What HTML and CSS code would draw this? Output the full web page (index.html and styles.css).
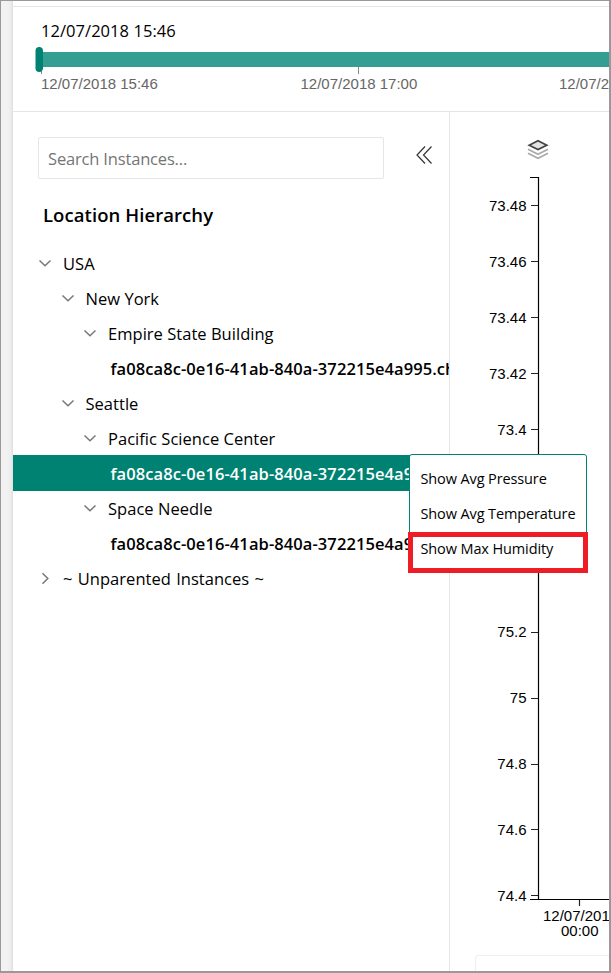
FILE: index.html
```html
<!DOCTYPE html>
<html lang="en">
<head>
<meta charset="utf-8">
<title>Location Hierarchy</title>
<link rel="stylesheet" href="styles.css">
</head>
<body>
<svg class="defs" width="0" height="0" aria-hidden="true">
  <symbol id="open" viewBox="0 0 14 14"><path d="M1.5 3.500 7 8.700 12.500 3.500" fill="none" stroke="#777" stroke-width="1.5"/></symbol>
  <symbol id="closed" viewBox="0 0 14 14"><path d="M4.5 1.300 9.800 6.500 4.500 11.700" fill="none" stroke="#777" stroke-width="1.5"/></symbol>
</svg>
<div class="window">
  <div class="gutter"></div>
  <main class="main">
    <section class="timeline">
      <div class="current">12/07/2018 15:46</div>
      <svg class="track" width="596" height="50" viewBox="0 0 596 50">
        <rect x="26" y="7" width="570" height="15" fill="#339e91"/>
        <path d="M28.5 22v7M345.5 22v7" stroke="#888"/>
        <rect x="22.5" y="2" width="7.5" height="25" rx="3.75" fill="#008272"/>
        <g class="label">
          <text x="28" y="44">12/07/2018 15:46</text>
          <text x="287.500" y="44">12/07/2018 17:00</text>
          <text x="546" y="44">12/07/2</text>
        </g>
      </svg>
    </section>
    <div class="body">
      <aside class="sidebar">
        <div class="searchbar">
          <input class="search" type="text" placeholder="Search Instances...">
          <svg class="collapse" width="18" height="20" viewBox="0 0 18 20"><path d="M10 1.500 2 10l8 8.500M16.500 1.500 8.500 10l8 8.500" fill="none" stroke="#333" stroke-width="1.200"/></svg>
        </div>
        <h1 class="heading"><span>Location Hierarchy</span></h1>
        <ul class="tree">
          <li class="row"><svg class="chev"><use href="#open"/></svg><span>USA</span></li>
          <li class="row l1"><svg class="chev"><use href="#open"/></svg><span>New York</span></li>
          <li class="row l2"><svg class="chev"><use href="#open"/></svg><span>Empire State Building</span></li>
          <li class="row leaf"><span>fa08ca8c-0e16-41ab-840a-372215e4a995.ch</span></li>
          <li class="row l1"><svg class="chev"><use href="#open"/></svg><span>Seattle</span></li>
          <li class="row l2"><svg class="chev"><use href="#open"/></svg><span>Pacific Science Center</span></li>
          <li class="row leaf selected"><span>fa08ca8c-0e16-41ab-840a-372215e4a9</span></li>
          <li class="row l2"><svg class="chev"><use href="#open"/></svg><span>Space Needle</span></li>
          <li class="row leaf"><span>fa08ca8c-0e16-41ab-840a-372215e4a9</span></li>
          <li class="row unparented"><svg class="chev"><use href="#closed"/></svg><span>~ Unparented Instances ~</span></li>
        </ul>
      </aside>
      <section class="chart">
        <svg width="159" height="843" viewBox="0 0 159 843">
          <g fill="none">
            <path d="M78 41.200 88 46.200l10-5M78 37.200l10 5 10-5" stroke="#aaa" stroke-width="1.700"/>
            <path d="M79.200 33.200 88 28.800l8.800 4.400-8.800 4.400Z" fill="#e4e4e4" stroke="#444" stroke-width="1.700"/>
          </g>
          <path d="M80 65.500h8.500v722M80 787.500h79" fill="none" stroke="#000" stroke-width="1.200"/>
          <path d="M81 93.500h7M81 149.500h7M81 205.500h7M81 261.500h7M81 317.500h7M81 520.500h7M81 586.500h7M81 652.500h7M81 717.500h7M81 783.500h7M129.500 788v6" stroke="#222" stroke-width="1.200"/>
          <g class="ylabels">
            <text x="76.500" y="99">73.48</text>
            <text x="76.500" y="155">73.46</text>
            <text x="76.500" y="211">73.44</text>
            <text x="76.500" y="267">73.42</text>
            <text x="76.500" y="323">73.4</text>
            <text x="76.500" y="525">75.2</text>
            <text x="76.500" y="591">75</text>
            <text x="76.500" y="657">74.8</text>
            <text x="76.500" y="723">74.6</text>
            <text x="76.500" y="789">74.4</text>
          </g>
          <g class="xlabels">
            <text x="93" y="809">12/07/201</text>
            <text x="111" y="824">00:00</text>
          </g>
        </svg>
        <div class="legend"></div>
      </section>
    </div>
  </main>
  <div class="menu">
    <div class="item">Show Avg Pressure</div>
    <div class="item">Show Avg Temperature</div>
    <div class="item marked">Show Max Humidity</div>
  </div>
</div>
</body>
</html>
```
FILE: styles.css
```css
*, *::before { box-sizing: border-box; }
body {
  margin: 0;
  font-family: "Open Sans", "Noto Sans", sans-serif;
  color: #000;
  background: #fff;
}
.defs { position: absolute; }
.window {
  position: relative;
  display: grid;
  grid-template-columns: 12px 596px;
  width: 611px;
  height: 973px;
  border: solid #999;
  border-width: 1px 2px 2px 1px;
  overflow: hidden;
}
.gutter { background: linear-gradient(to right, #f2f2f2 50%, #ededed 80%, #dedede); }
.main {
  display: flex;
  flex-direction: column;
  min-width: 0;
  height: 970px;
  padding-top: 5px;
}
.timeline {
  height: 106px;
  flex: none;
  border-top: 1px solid #e6e6e6;
  border-bottom: 1px solid #e6e6e6;
  padding-top: 12px;
}
.current {
  height: 26px;
  padding-left: 28px;
  font-size: 16.500px;
  line-height: 23px;
  letter-spacing: 0.050px;
}
.track { display: block; }
.label, .ylabels, .xlabels {
  font-family: "Liberation Sans", Arial, sans-serif;
  font-size: 15px;
}
.label { fill: #666; }
.ylabels { text-anchor: end; }
.body { display: flex; flex: 1; min-height: 0; }
.sidebar {
  width: 437px;
  flex: none;
  border-right: 1px solid #e6e6e6;
  overflow: hidden;
}
.searchbar { display: flex; align-items: center; height: 42px; margin: 25px 0 0 25px; }
.search {
  width: 346px;
  height: 42px;
  padding: 1px 9px 0;
  border: 1px solid #e6e6e6;
  border-radius: 2px;
  font: 16.500px "Open Sans", sans-serif;
  letter-spacing: -0.170px;
  outline: none;
}
.search::placeholder { color: #757575; opacity: 1; }
.collapse { margin: -7px 0 0 31px; }
.heading {
  margin: 19px 0 0 30px;
  height: 34px;
  font-size: 18.500px;
  font-weight: 600;
  line-height: 34px;
  letter-spacing: 0.070px;
}
.tree { list-style: none; margin: 14px 0 0; padding: 0; }
.row {
  display: flex;
  align-items: center;
  height: 35px;
  padding-left: 25px;
  font-size: 16.500px;
  letter-spacing: 0.030px;
  white-space: nowrap;
}
.l1 { padding-left: 47.500px; }
.l2 { padding-left: 70px; }
.leaf { padding-left: 97.500px; font-weight: 600; letter-spacing: 0.080px; }
.unparented { word-spacing: 1px; }
.selected {
  height: 36px;
  margin-top: -1px;
  padding-top: 1px;
  background: #008272;
  color: #fff;
}
.chev { width: 14px; height: 14px; margin-right: 11px; flex: none; }
.chart { width: 159px; overflow: hidden; }
.chart svg { display: block; }
.legend {
  width: 170px;
  height: 40px;
  margin-left: 25px;
  border: 1px solid #eee;
  border-radius: 3px;
}
.menu {
  position: absolute;
  left: 408px;
  top: 453px;
  width: 178px;
  height: 118px;
  padding-top: 6px;
  background: #fff;
  border: 1px solid #008272;
  border-radius: 3px;
}
.item {
  height: 35px;
  padding-left: 10.500px;
  font-size: 14.500px;
  line-height: 35px;
  letter-spacing: -0.120px;
  white-space: nowrap;
}
.marked::before {
  content: "";
  position: absolute;
  left: -2px;
  top: 77px;
  width: 180px;
  height: 41px;
  border: 5px solid #ee1c25;
}
```
